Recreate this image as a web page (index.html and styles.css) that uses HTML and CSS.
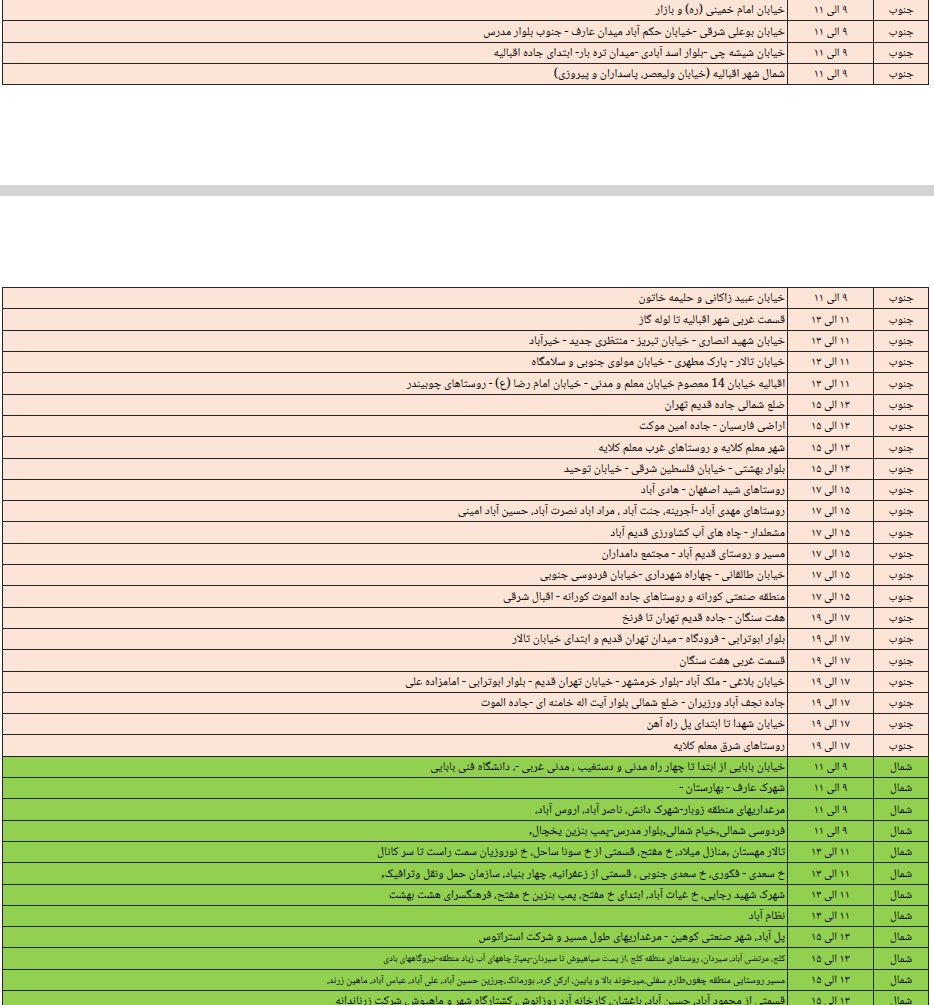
FILE: index.html
```html
<!DOCTYPE html>
<html lang="fa" dir="rtl">
<head>
<meta charset="utf-8">
<title>جدول خاموشی</title>
<link rel="stylesheet" href="styles.css">
</head>
<body>
<table class="sched sched-top">
<colgroup><col class="c-region"><col class="c-time"><col class="c-desc"></colgroup>
<tbody>
<tr class="south"><td class="region">جنوب</td><td class="time">۹ الی ۱۱</td><td class="desc">خیابان امام خمینی (ره) و بازار</td></tr>
<tr class="south"><td class="region">جنوب</td><td class="time">۹ الی ۱۱</td><td class="desc">خیابان بوعلی شرقی -خیابان حکم آباد میدان عارف - جنوب بلوار مدرس</td></tr>
<tr class="south"><td class="region">جنوب</td><td class="time">۹ الی ۱۱</td><td class="desc">خیابان شیشه چی -بلوار اسد آبادی -میدان تره بار-  ابتدای جاده اقبالیه</td></tr>
<tr class="south"><td class="region">جنوب</td><td class="time">۹ الی ۱۱</td><td class="desc">شمال شهر اقبالیه (خیابان ولیعصر، پاسداران و پیروزی)</td></tr>
</tbody>
</table>

<div class="divider"></div>

<table class="sched sched-main">
<colgroup><col class="c-region"><col class="c-time"><col class="c-desc"></colgroup>
<tbody>
<tr class="south"><td class="region">جنوب</td><td class="time">۹ الی ۱۱</td><td class="desc">خیابان عبید زاکانی و حلیمه خاتون</td></tr>
<tr class="south"><td class="region">جنوب</td><td class="time">۱۱ الی ۱۳</td><td class="desc">قسمت غربی شهر اقبالیه تا لوله گاز</td></tr>
<tr class="south"><td class="region">جنوب</td><td class="time">۱۱ الی ۱۳</td><td class="desc">خیابان شهید انصاری - خیابان تبریز - منتظری جدید - خیرآباد</td></tr>
<tr class="south"><td class="region">جنوب</td><td class="time">۱۱ الی ۱۳</td><td class="desc">خیابان تالار - پارک مطهری - خیابان مولوی جنوبی و سلامگاه</td></tr>
<tr class="south"><td class="region">جنوب</td><td class="time">۱۱ الی ۱۳</td><td class="desc">اقبالیه خیابان 14 معصوم خیابان معلم و مدنی  - خیابان امام رضا (ع) - روستاهای چوبیندر</td></tr>
<tr class="south"><td class="region">جنوب</td><td class="time">۱۳ الی ۱۵</td><td class="desc">ضلع شمالی جاده قدیم تهران</td></tr>
<tr class="south"><td class="region">جنوب</td><td class="time">۱۳ الی ۱۵</td><td class="desc">اراضی فارسیان - جاده امین موکت</td></tr>
<tr class="south"><td class="region">جنوب</td><td class="time">۱۳ الی ۱۵</td><td class="desc">شهر معلم کلایه و روستاهای غرب معلم کلایه</td></tr>
<tr class="south"><td class="region">جنوب</td><td class="time">۱۳ الی ۱۵</td><td class="desc">بلوار بهشتی - خیابان فلسطین شرقی - خیابان توحید</td></tr>
<tr class="south"><td class="region">جنوب</td><td class="time">۱۵ الی ۱۷</td><td class="desc">روستاهای شید اصفهان - هادی آباد</td></tr>
<tr class="south"><td class="region">جنوب</td><td class="time">۱۵ الی ۱۷</td><td class="desc">روستاهای مهدی آباد -آجرینه، جنت آباد ، مراد اباد نصرت آباد، حسین آباد امینی</td></tr>
<tr class="south"><td class="region">جنوب</td><td class="time">۱۵ الی ۱۷</td><td class="desc">مشعلدار - چاه های آب کشاورزی قدیم آباد</td></tr>
<tr class="south"><td class="region">جنوب</td><td class="time">۱۵ الی ۱۷</td><td class="desc">مسیر و روستای قدیم آباد - مجتمع دامداران</td></tr>
<tr class="south"><td class="region">جنوب</td><td class="time">۱۵ الی ۱۷</td><td class="desc">خیابان طالقانی - چهاراه شهرداری -خیابان فردوسی جنوبی</td></tr>
<tr class="south"><td class="region">جنوب</td><td class="time">۱۵ الی ۱۷</td><td class="desc">منطقه صنعتی کورانه و روستاهای جاده الموت کورانه - اقبال شرقی</td></tr>
<tr class="south"><td class="region">جنوب</td><td class="time">۱۷ الی ۱۹</td><td class="desc">هفت سنگان - جاده قدیم تهران تا فرنخ</td></tr>
<tr class="south"><td class="region">جنوب</td><td class="time">۱۷ الی ۱۹</td><td class="desc">بلوار ابوترابی - فرودگاه - میدان تهران قدیم و ابتدای خیابان تالار</td></tr>
<tr class="south"><td class="region">جنوب</td><td class="time">۱۷ الی ۱۹</td><td class="desc">قسمت غربی هفت سنگان</td></tr>
<tr class="south"><td class="region">جنوب</td><td class="time">۱۷ الی ۱۹</td><td class="desc">خیابان بلاغی - ملک آباد -بلوار خرمشهر - خیابان تهران قدیم - بلوار ابوترابی - امامزاده علی</td></tr>
<tr class="south"><td class="region">جنوب</td><td class="time">۱۷ الی ۱۹</td><td class="desc"> جاده نجف آباد ورزیران - ضلع شمالی بلوار آیت اله خامنه ای -جاده الموت</td></tr>
<tr class="south"><td class="region">جنوب</td><td class="time">۱۷ الی ۱۹</td><td class="desc">خیابان شهدا تا ابتدای پل راه آهن</td></tr>
<tr class="south"><td class="region">جنوب</td><td class="time">۱۷ الی ۱۹</td><td class="desc">روستاهای شرق معلم کلایه</td></tr>
<tr class="north"><td class="region">شمال</td><td class="time">۹ الی ۱۱</td><td class="desc">خیابان بابایی از ابتدا تا چهار راه مدنی و دستغیب ، مدنی غربی -، دانشگاه فنی بابایی</td></tr>
<tr class="north"><td class="region">شمال</td><td class="time">۹ الی ۱۱</td><td class="desc">شهرک عارف - بهارستان -</td></tr>
<tr class="north"><td class="region">شمال</td><td class="time">۹ الی ۱۱</td><td class="desc">مرغداریهای منطقه زوبار-شهرک دانش، ناصر آباد، اروس آباد،</td></tr>
<tr class="north"><td class="region">شمال</td><td class="time">۹ الی ۱۱</td><td class="desc">فردوسی شمالی,خیام شمالی,بلوار مدرس-پمپ بنزین یخچال,</td></tr>
<tr class="north"><td class="region">شمال</td><td class="time">۱۱ الی ۱۳</td><td class="desc">تالار مهستان ,منازل میلاد، خ مفتح،  قسمتی از خ سونا ساحل، خ نوروزیان سمت راست تا سر کانال</td></tr>
<tr class="north"><td class="region">شمال</td><td class="time">۱۱ الی ۱۳</td><td class="desc">خ سعدی - فکوری، خ سعدی جنوبی ، قسمتی از زعفرانیه، چهار بنیاد، سازمان حمل ونقل وترافیک,</td></tr>
<tr class="north"><td class="region">شمال</td><td class="time">۱۱ الی ۱۳</td><td class="desc">شهرک شهید رجایی، خ غیاث آباد، ابتدای خ مفتح، پمپ بنزین خ مفتح، فرهنگسرای هشت بهشت</td></tr>
<tr class="north"><td class="region">شمال</td><td class="time">۱۱ الی ۱۳</td><td class="desc">نظام آباد</td></tr>
<tr class="north"><td class="region">شمال</td><td class="time">۱۳ الی ۱۵</td><td class="desc">پل آباد، شهر صنعتی کوهین - مرغداریهای طول مسیر و شرکت استراتوس</td></tr>
<tr class="north"><td class="region">شمال</td><td class="time">۱۳ الی ۱۵</td><td class="desc fit-a">کلج، مرتضی آباد، سیردان، روستاهای منطقه کلج ،از پست سیاهپوش تا سیردان-پمپاژ چاههای آب زیاد منطقه-نیروگاههای بادی</td></tr>
<tr class="north"><td class="region">شمال</td><td class="time">۱۳ الی ۱۵</td><td class="desc fit-b">مسیر روستایی منطقه چغور,طارم سفلی،میرخوند بالا و پایین، ارکن کرد، بورمانک،چرزین حسین آباد، علی آباد، عباس آباد،  ماهین زرند،</td></tr>
<tr class="north"><td class="region">شمال</td><td class="time">۱۳ الی ۱۵</td><td class="desc">قسمتی از محمود آباد، حسین آباد، باغشان، کارخانه آرد روزانوش، کشتارگاه شهر و ماهیوش، شرکت زرناندانه</td></tr>
</tbody>
</table>
</body>
</html>
```

FILE: styles.css
```css
html, body {
  margin: 0;
  padding: 0;
  background: #ffffff;
}

body {
  font-family: "Noto Naskh Arabic", "Noto Sans Arabic", "DejaVu Sans", sans-serif;
  color: #000;
}

.sched {
  direction: rtl;
  border-collapse: collapse;
  table-layout: fixed;
  width: 927px;
  margin-left: 2px;
  margin-right: 5px;
  font-size: 12px;
}

.sched-top {
  margin-top: -1px;
}

.c-region { width: 55px; }
.c-time { width: 86px; }
.c-desc { width: auto; }

.sched td {
  border: 1px solid #262626;
  height: 20.3px;
  padding: 0 2px;
  white-space: nowrap;
  overflow: hidden;
  vertical-align: bottom;
  line-height: 19px;
}

.sched .region,
.sched .time {
  text-align: center;
  font-size: 11.5px;
}

.sched .desc {
  text-align: right;
}

.sched .fit-a {
  font-size: 9.2px;
}

.sched .fit-b {
  font-size: 9.9px;
}

.south td { background: #fce4d6; }
.north td { background: #92d050; }

.divider {
  height: 11px;
  background: #d4d4d4;
  margin-top: 100px;
  margin-bottom: 91px;
}
```
